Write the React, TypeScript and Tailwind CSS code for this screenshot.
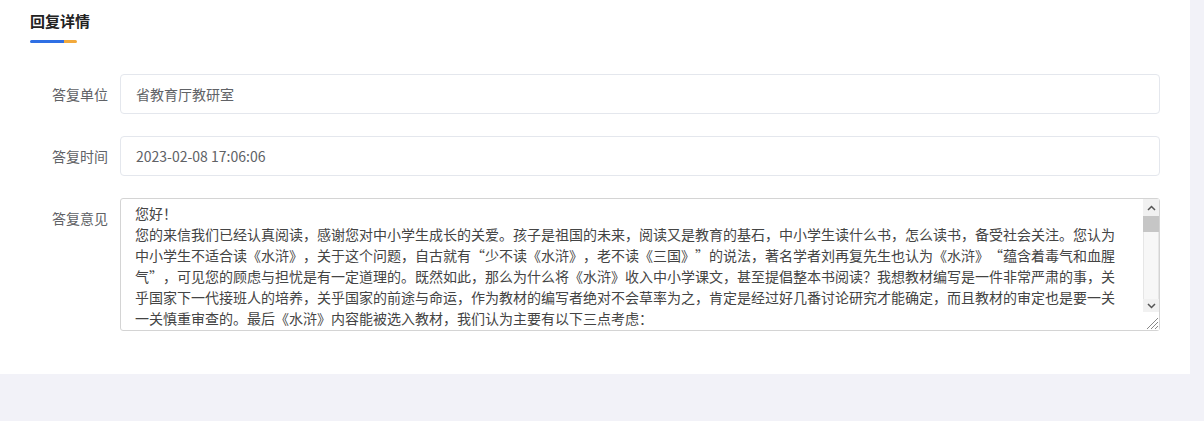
const reply = [
  '您好！',
  '您的来信我们已经认真阅读，感谢您对中小学生成长的关爱。孩子是祖国的未来，阅读又是教育的基石，中小学生读什么书，怎么读书，备受社会关注。您认为',
  '中小学生不适合读《水浒》，关于这个问题，自古就有“少不读《水浒》，老不读《三国》”的说法，著名学者刘再复先生也认为《水浒》“蕴含着毒气和血腥',
  '气”，可见您的顾虑与担忧是有一定道理的。既然如此，那么为什么将《水浒》收入中小学课文，甚至提倡整本书阅读？我想教材编写是一件非常严肃的事，关',
  '乎国家下一代接班人的培养，关乎国家的前途与命运，作为教材的编写者绝对不会草率为之，肯定是经过好几番讨论研究才能确定，而且教材的审定也是要一关',
  '一关慎重审查的。最后《水浒》内容能被选入教材，我们认为主要有以下三点考虑：',
].join('\n');

function Field({ label, value }: { label: string; value: string }) {
  return (
    <div className="flex items-center">
      <label className="w-[108px] shrink-0 text-right text-[14px] text-[#606266]">{label}</label>
      <div className="ml-3 flex h-10 flex-1 items-center rounded border border-[#e4e7ed] px-[15px] text-[14px] text-[#606266]">
        {value}
      </div>
    </div>
  );
}

function Scrollbar() {
  return (
    <div className="absolute top-px right-px bottom-px flex w-[16px] flex-col bg-[#f1f1f1]">
      <div className="flex h-[17px] items-center justify-center">
        <svg width="9" height="6" viewBox="0 0 9 6">
          <path d="M1 5l3.5-3.5L8 5" fill="none" stroke="#555" strokeWidth="1.5" />
        </svg>
      </div>
      <div className="h-[16px] bg-[#c6c6c6]" />
      <div className="flex-1 border-x border-[#e6e6e6] bg-[#f7f7f7]" />
      <div className="flex h-[13px] items-center justify-center">
        <svg width="9" height="6" viewBox="0 0 9 6">
          <path d="M1 1l3.5 3.5L8 1" fill="none" stroke="#555" strokeWidth="1.5" />
        </svg>
      </div>
      <div className="flex h-[18px] items-end justify-end bg-white">
        <svg width="14" height="14" viewBox="0 0 14 14">
          <path d="M13 2L2 13M13 6L6 13M13 10L10 13" stroke="#888" strokeWidth="1" />
        </svg>
      </div>
    </div>
  );
}

export default function App() {
  return (
    <div lang="zh-CN" className="h-[421px] w-full bg-[#f2f2f8] font-['Noto_Sans_CJK_SC',sans-serif]">
      <div className="h-[374px] w-[1190px] bg-white pr-[30px]">
        <div className="px-[30px] pt-[11px]">
          <h2 className="text-[15px] font-bold leading-[20px] text-[#222]">回复详情</h2>
          <div className="mt-[9px] flex h-[3px] w-[47px] overflow-hidden rounded-full">
            <div className="w-[34px] bg-[#2f6fe4]" />
            <div className="flex-1 bg-[#f2a93b]" />
          </div>
        </div>

        <div className="mt-[31px] flex flex-col gap-[22px]">
          <Field label="答复单位" value="省教育厅教研室" />
          <Field label="答复时间" value="2023-02-08 17:06:06" />
          <div className="flex items-start">
            <label className="w-[108px] shrink-0 text-right text-[14px] leading-[40px] text-[#606266]">答复意见</label>
            <div className="relative ml-3 flex-1">
              <div className="h-[133px] overflow-hidden rounded-[3px] border border-[#d4d4d4] pt-[4px] pr-[32px] pl-[14px] text-[14px] leading-[21px] whitespace-pre-wrap text-[#444] [text-spacing-trim:space-all]">
                {reply}
              </div>
              <Scrollbar />
            </div>
          </div>
        </div>
      </div>
    </div>
  );
}
